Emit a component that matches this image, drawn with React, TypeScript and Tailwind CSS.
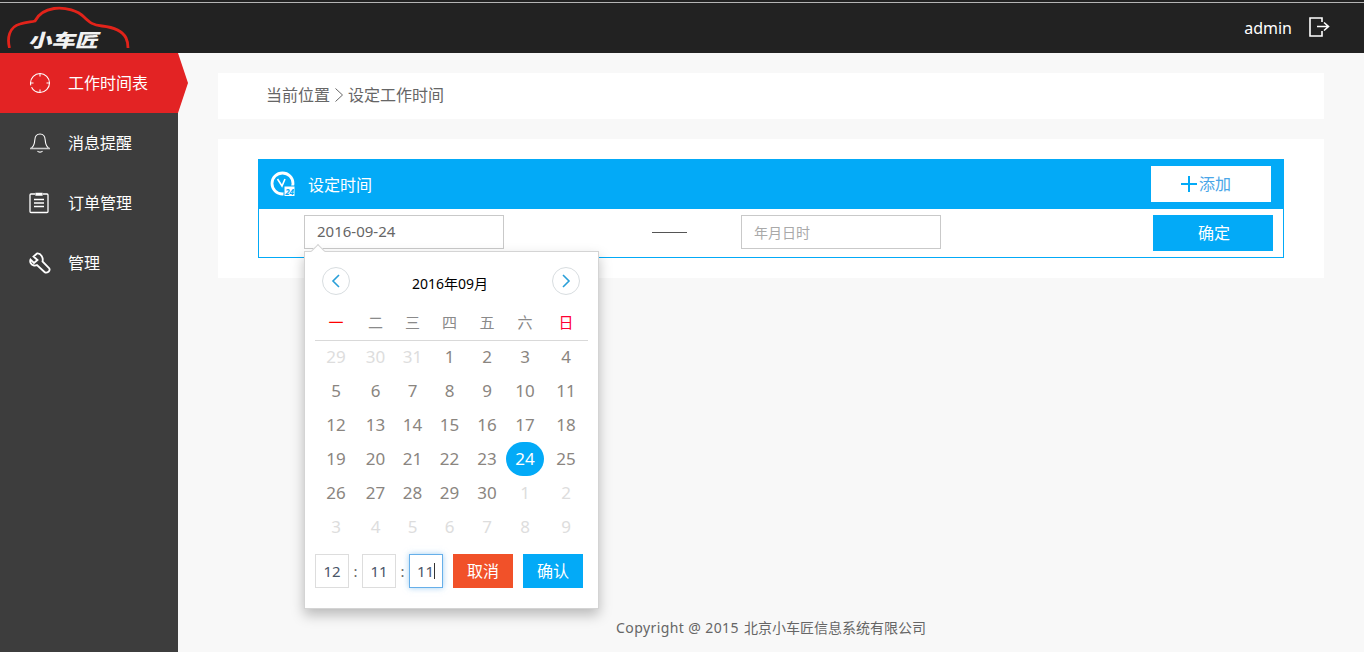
import React from "react";

const FONT = "font-['Noto_Sans','Noto_Sans_CJK_SC',sans-serif]";

const Logo = () => (
  <div className="relative h-[50px] w-[178px] shrink-0 overflow-hidden">
    <svg className="absolute left-0 top-0" width="178" height="45" viewBox="0 0 178 45" fill="none">
      <path d="M9.5 45 C7 35 9 24 20 21 C26 19 31 19 35 18 C38 12 44 7 54 5.5 C66 4 78 8 84 14 C90 20 93 22 102 23 C112 24 122 27 126 35 C128 39 128 42 128 45" stroke="#e2231a" strokeWidth="2.8" />
    </svg>
    <span className="absolute left-[30px] top-[26px] origin-left scale-x-[1.3] -skew-x-12 whitespace-nowrap text-[18px] leading-[22px] font-black text-[#f2f2f2]">小车匠</span>
  </div>
);

const Side = ({ icon, label, active }: { icon: React.ReactNode; label: string; active?: boolean }) => (
  <div className={`relative flex h-[60px] items-center pl-[29px] text-[16px] text-white ${active ? "bg-[#e32324]" : ""}`}>
    <span className="flex w-[39px] shrink-0 items-center">{icon}</span>
    <span>{label}</span>
    {active && (
      <span className="absolute left-[178px] top-0 h-[60px] w-[10px] bg-[#e32324] [clip-path:polygon(0_0,100%_50%,0_100%)]" />
    )}
  </div>
);

const Row = ({ cells, muted }: { cells: (string | number)[]; muted: (v: number) => boolean }) => (
  <>
    {cells.map((c, i) => (
      <div key={i} className={`flex h-[34px] items-center justify-center text-[17px] ${muted(i) ? "text-[#dddddd]" : "text-[#8a8580]"}`}>
        {c === 24 ? (
          <span className="flex h-[34px] w-[38px] items-center justify-center rounded-full bg-[#03aaf7] text-white">24</span>
        ) : (
          c
        )}
      </div>
    ))}
  </>
);

const rows: { c: number[]; m: (i: number) => boolean }[] = [
  { c: [29, 30, 31, 1, 2, 3, 4], m: (i) => i < 3 },
  { c: [5, 6, 7, 8, 9, 10, 11], m: () => false },
  { c: [12, 13, 14, 15, 16, 17, 18], m: () => false },
  { c: [19, 20, 21, 22, 23, 24, 25], m: () => false },
  { c: [26, 27, 28, 29, 30, 1, 2], m: (i) => i > 4 },
  { c: [3, 4, 5, 6, 7, 8, 9], m: () => true },
];

const Picker = () => (
  <div className="absolute left-[45px] top-[91px] z-10 h-[358px] w-[295px] border border-[#d4d4d4] bg-white pl-[10px] shadow-[0_6px_12px_rgba(0,0,0,0.25)]">
    <span className="absolute left-[8px] top-[-6px] h-[10px] w-[10px] rotate-45 border-l border-t border-[#d4d4d4] bg-white" />
    <div className="flex h-[62px] items-start">
      <span className="ml-[7px] mt-[15px] flex h-[28px] w-[28px] shrink-0 items-center justify-center rounded-full border border-[#d8dde0]">
        <svg width="12" height="16" viewBox="0 0 12 16" fill="none"><path d="M9 2 L3 8 L9 14" stroke="#2a9fd8" strokeWidth="1.6" /></svg>
      </span>
      <span className="mt-[22px] w-[200px] text-center text-[14px] leading-[20px] text-black">2016年09月</span>
      <span className="ml-[2px] mt-[15px] flex h-[28px] w-[28px] shrink-0 items-center justify-center rounded-full border border-[#d8dde0]">
        <svg width="12" height="16" viewBox="0 0 12 16" fill="none"><path d="M3 2 L9 8 L3 14" stroke="#2a9fd8" strokeWidth="1.6" /></svg>
      </span>
    </div>
    <div className="grid w-[273px] grid-cols-[42px_37px_37px_37px_38px_38px_44px] border-b border-[#d9d9d9] pb-[9px] text-center text-[15px] leading-[17px] text-[#8a8a8a]">
      <span className="text-[#ff0000]">一</span>
      <span>二</span>
      <span>三</span>
      <span>四</span>
      <span>五</span>
      <span>六</span>
      <span className="text-[#ff0033]">日</span>
    </div>
    <div className="-mt-px grid w-[273px] grid-cols-[42px_37px_37px_37px_38px_38px_44px]">
      {rows.map((r, i) => (
        <Row key={i} cells={r.c} muted={r.m} />
      ))}
    </div>
    <div className="mt-[10px] flex items-center text-[15px]">
      <span className="flex h-[34px] w-[34px] items-center justify-center border border-[#dddddd] text-[#4a5668]">12</span>
      <span className="w-[13px] text-center text-[#666666]">:</span>
      <span className="flex h-[34px] w-[34px] items-center justify-center border border-[#dddddd] text-[#4a5668]">11</span>
      <span className="w-[13px] text-center text-[#666666]">:</span>
      <span className="flex h-[34px] w-[34px] items-center justify-center border border-[#66afe9] text-[#4a5668] shadow-[0_0_6px_rgba(102,175,233,0.6)]">
        11<span className="h-[16px] w-px bg-[#333333]" />
      </span>
      <span className="ml-[10px] flex h-[34px] w-[60px] items-center justify-center bg-[#f15129] text-[16px] text-white">取消</span>
      <span className="ml-[10px] flex h-[34px] w-[60px] items-center justify-center bg-[#03aaf7] text-[16px] text-white">确认</span>
    </div>
  </div>
);

export default function App() {
  return (
    <div className={`${FONT} flex h-[652px] w-[1364px] flex-col overflow-hidden bg-[#f8f8f8]`}>
      <header className="flex h-[53px] shrink-0 flex-col bg-[#222222]">
        <div className="mt-[2px] h-px shrink-0 bg-[#b5b5b5]" />
        <div className="flex flex-1 items-end justify-between">
          <Logo />
          <div className="mb-[13px] mr-[34px] flex items-center">
            <span className="text-[16px] leading-[24px] text-white">admin</span>
            <svg className="ml-[16px] -translate-y-px" width="22" height="22" viewBox="0 0 22 22" fill="none">
              <path d="M14 6 V2 H2 V20 H14 V15" stroke="#fff" strokeWidth="1.6" />
              <path d="M9 10.5 H20 M16 6.5 L20.5 10.5 L16 14.5" stroke="#fff" strokeWidth="1.6" />
            </svg>
          </div>
        </div>
      </header>
      <div className="flex min-h-0 flex-1">
        <aside className="relative w-[178px] shrink-0 bg-[#3d3d3d]">
          <Side
            active
            label="工作时间表"
            icon={
              <svg width="22" height="22" viewBox="0 0 22 22" fill="none" stroke="#fff" strokeWidth="1.1">
                <path d="M11 1.5 A9.5 9.5 0 1 1 1.5 11 A9.5 9.5 0 0 1 11 1.5" strokeDasharray="40 2 18" />
                <path d="M11 1.5 V4.5 M11 17.5 V20.5 M1.5 11 H4.5 M17.5 11 H20.5" />
              </svg>
            }
          />
          <Side
            label="消息提醒"
            icon={
              <svg width="22" height="22" viewBox="0 0 22 22" fill="none" stroke="#fff" strokeWidth="1.1">
                <path d="M2.5 16 C5 14 5.5 12 5.8 8 C6 4 8 2 11 2 C14 2 16 4 16.2 8 C16.5 12 17 14 19.5 16" />
                <path d="M1 16.5 H21" stroke="#c8c8c8" strokeWidth="1.6" />
                <path d="M8.5 19 C9.5 20.5 12.5 20.5 13.5 19" />
              </svg>
            }
          />
          <Side
            label="订单管理"
            icon={
              <svg width="20" height="22" viewBox="0 0 20 22" fill="none" stroke="#fff" strokeWidth="1.3">
                <path d="M6 2 H2 A1 1 0 0 0 1 3 V19.5 A1 1 0 0 0 2 20.5 H18 A1 1 0 0 0 19 19.5 V3 A1 1 0 0 0 18 2 H14" />
                <path d="M7 1.5 H13 V3 H7 Z" fill="#fff" />
                <path d="M5 7.5 H15 M5 11 H15 M5 14.5 H15" />
              </svg>
            }
          />
          <Side
            label="管理"
            icon={
              <svg width="22" height="22" viewBox="0 0 22 22" fill="none" stroke="#fff" strokeWidth="1.8">
                <path d="M8 1.5 L4.5 4.5 L8.5 8 L5 11 L1.5 7.5 C0.5 10 2 13 5 13.5 C6 13.7 7 13.5 8 13 L15.5 20 C16.5 20.8 18 20.8 19.5 19.8 C20.8 18.5 20.8 17 20 16 L13.5 9.5 C14.5 6 12 1 8 1.5 Z" />
              </svg>
            }
          />
        </aside>
        <main className="flex min-w-0 flex-1 flex-col px-[40px] pt-[20px]">
          <div className="flex h-[46px] shrink-0 items-center bg-white pb-[2px] pl-[48px] text-[16px] text-[#666666]">
            <span>当前位置</span>
            <svg className="ml-[4px] mr-[4px]" width="10" height="16" viewBox="0 0 10 16" fill="none"><path d="M1.5 1.5 L8.5 8 L1.5 14.5" stroke="#666" strokeWidth="1" /></svg>
            <span>设定工作时间</span>
          </div>
          <section className="mt-[20px] h-[139px] shrink-0 bg-white px-[40px] pt-[20px]">
            <div className="relative h-[99px] border border-[#03aaf7]">
              <div className="mx-[-1px] mt-[-1px] flex h-[50px] items-center justify-between bg-[#03aaf7] pl-[12px] pr-[13px]">
                <div className="flex items-center text-[16px] text-white">
                  <svg width="26" height="26" viewBox="0 0 26 26" fill="none">
                    <circle cx="12.5" cy="12.5" r="10.5" stroke="#fff" strokeWidth="2.8" />
                    <path d="M7.5 8 L12 15 L15 8" stroke="#fff" strokeWidth="1.6" />
                    <rect x="14" y="15" width="11" height="10.5" fill="#fff" stroke="#03aaf7" />
                    <text x="15.2" y="23.5" fontSize="8" fontWeight="700" fontStyle="italic" fill="#03aaf7">24</text>
                  </svg>
                  <span className="ml-[12px] translate-y-px">设定时间</span>
                </div>
                <div className="flex h-[36px] w-[120px] items-center justify-center bg-white pr-[10px] text-[16px] text-[#4aa6e8]">
                  <svg className="mr-[2px]" width="16" height="16" viewBox="0 0 16 16"><path d="M8 0 V16 M0 8 H16" stroke="#03aaf7" strokeWidth="2" /></svg>
                  添加
                </div>
              </div>
              <div className="flex h-[48px] items-start pl-[45px] pt-[6px]">
                <span className="flex h-[34px] w-[200px] items-center border border-[#c9c9c9] pb-[2px] pl-[12px] text-[15px] text-[#666666]">2016-09-24</span>
                <span className="ml-[148px] mt-[17px] h-px w-[35px] bg-[#555555]" />
                <span className="ml-[54px] flex h-[34px] w-[200px] items-center border border-[#c9c9c9] pl-[12px] text-[14px] text-[#a9a9a9]">年月日时</span>
                <span className="ml-[212px] flex h-[36px] w-[120px] items-center justify-center bg-[#03aaf7] pl-[2px] text-[16px] text-white">确定</span>
              </div>
              <Picker />
            </div>
          </section>
          <footer className="mt-auto flex h-[48px] items-center justify-center pb-[2px] text-[14px] text-[#666666]">
            <span className="tracking-[0.4px]">Copyright @ 2015</span>
            <span className="ml-[5px]">北京小车匠信息系统有限公司</span>
          </footer>
        </main>
      </div>
    </div>
  );
}
